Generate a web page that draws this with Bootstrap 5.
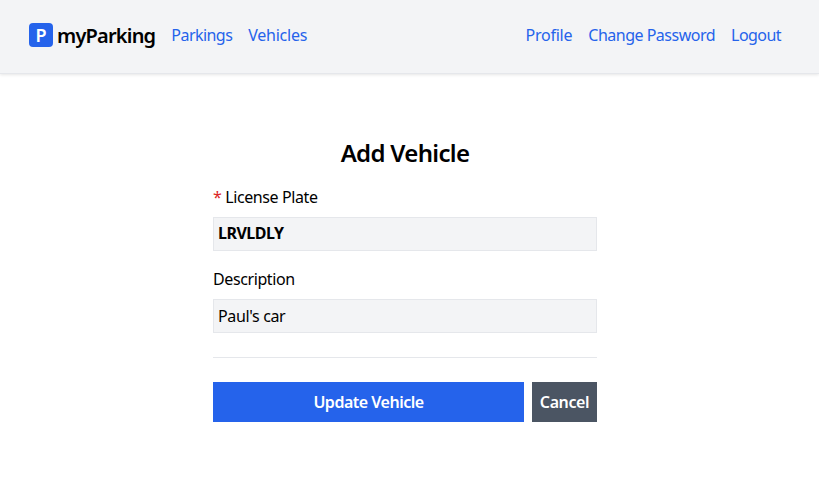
<!DOCTYPE html>
<html lang="en">
<head>
<meta charset="utf-8">
<meta name="viewport" content="width=device-width, initial-scale=1">
<title>Add Vehicle - myParking</title>
<link href="https://cdn.jsdelivr.net/npm/bootstrap@5.3.0/dist/css/bootstrap.min.css" rel="stylesheet">
<style>
body{font-family:"Noto Sans",sans-serif;font-size:16px;line-height:24px;color:#000;background:#fff;padding-right:9px;overflow:hidden}
.topbar{height:74px;margin-right:-9px;padding:0 38px 3px 29px;background:#f3f4f6;border-bottom:1px solid #e5e7eb;box-shadow:0 1px 3px rgba(0,0,0,.1)}
.topbar a{color:#2563eb;text-decoration:none;white-space:nowrap;letter-spacing:-.25px}
.topbar a.tight{letter-spacing:-.55px}
.topbar a.snug{letter-spacing:-.5px}
.topbar a.brand{color:#000;font-size:20px;line-height:28px;font-weight:600;letter-spacing:-.8px}
.brand-name{padding-top:2px}
.logo{width:24px;height:24px;border-radius:4px;background:#2563eb;color:#fff;font-size:18px;line-height:26px;letter-spacing:0}
.vehicle-form{width:384px;margin:63px auto 0}
h1{font-size:24px;line-height:32px;font-weight:600;letter-spacing:-.67px}
.form-label{line-height:24px;letter-spacing:-.4px}
.form-control,.form-control:focus{height:34px;padding:4px;border-radius:0;border-color:#e5e7eb;background:#f3f4f6;color:#000;box-shadow:none;letter-spacing:-.35px}
.form-control.plate{font-weight:700;letter-spacing:-.5px;padding:3px 4px 5px}
.required{color:#dc2626}
.divider{height:1px;background:#e5e7eb}
.btn{height:40px;padding:0;border:0;border-radius:0;font-weight:600;letter-spacing:-.5px}
.btn-update,.btn-update:hover{background:#2563eb;color:#fff}
.btn-stop,.btn-stop:hover{width:65px;background:#4b5563;color:#fff;letter-spacing:-.4px}
</style>
<script src="https://cdn.jsdelivr.net/npm/bootstrap@5.3.0/dist/js/bootstrap.bundle.min.js"></script>
</head>
<body>
<nav class="topbar d-flex align-items-center justify-content-between">
  <div class="d-flex align-items-center gap-3">
    <a href="#" class="brand d-flex align-items-center gap-1"><span class="logo d-flex align-items-center justify-content-center">P</span><span class="brand-name">myParking</span></a>
    <a href="#" class="tight">Parkings</a>
    <a href="#">Vehicles</a>
  </div>
  <div class="d-flex gap-3">
    <a href="#">Profile</a>
    <a href="#" class="snug">Change Password</a>
    <a href="#" class="tight">Logout</a>
  </div>
</nav>
<form class="vehicle-form d-flex flex-column">
  <h1 class="text-center mb-3">Add Vehicle</h1>
  <label class="form-label mb-2" for="plate"><span class="required">*</span> License Plate</label>
  <input id="plate" class="form-control plate mb-3" value="LRVLDLY">
  <label class="form-label mb-2" for="description">Description</label>
  <input id="description" class="form-control" value="Paul's car">
  <div class="divider my-4"></div>
  <div class="d-flex gap-2">
    <button type="button" class="btn btn-update flex-grow-1">Update Vehicle</button>
    <button type="button" class="btn btn-stop">Cancel</button>
  </div>
</form>
</body>
</html>
